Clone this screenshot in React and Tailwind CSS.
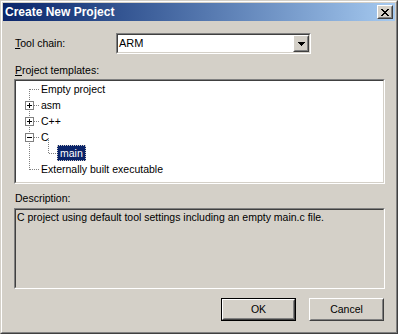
import React from "react";

const font = { fontFamily: '"Liberation Sans", Arial, sans-serif' };

function Sunken({ className = "", inner = "", children }) {
  return (
    <div className={`border border-t-[#808080] border-l-[#808080] border-r-white border-b-white ${className}`}>
      <div className={`h-full border border-t-[#404040] border-l-[#404040] border-r-[#d4d0c8] border-b-[#d4d0c8] ${inner}`}>
        {children}
      </div>
    </div>
  );
}

function Raised({ className = "", inner = "", children }) {
  return (
    <div className={`border border-t-white border-l-white border-r-[#404040] border-b-[#404040] ${className}`}>
      <div className={`h-full border border-t-[#d4d0c8] border-l-[#d4d0c8] border-r-[#808080] border-b-[#808080] ${inner}`}>
        {children}
      </div>
    </div>
  );
}

function Tree() {
  const rows = [
    { label: "Empty project", x: 25 },
    { label: "asm", x: 25 },
    { label: "C++", x: 25 },
    { label: "C", x: 25 },
    { label: "main", x: 41, selected: true },
    { label: "Externally built executable", x: 25 },
  ];
  const dot = "#808080";
  const boxes = [1, 2, 3];
  return (
    <div className="relative h-full bg-white">
      <svg className="absolute left-0 top-0" width="367" height="101" shapeRendering="crispEdges">
        <line x1="13.5" y1="8" x2="13.5" y2="89" stroke={dot} strokeDasharray="1 1" />
        {[0, 1, 2, 3, 5].map((i) => (
          <line key={i} x1="14" y1={i * 16 + 8.5} x2="23" y2={i * 16 + 8.5} stroke={dot} strokeDasharray="1 1" />
        ))}
        <line x1="32.5" y1="57" x2="32.5" y2="72" stroke={dot} strokeDasharray="1 1" />
        <line x1="33" y1="72.5" x2="41" y2="72.5" stroke={dot} strokeDasharray="1 1" />
        {boxes.map((i) => {
          const cy = i * 16 + 8;
          return (
            <g key={i}>
              <rect x="9.5" y={cy - 4 + 0.5} width="8" height="8" fill="white" stroke="#808080" />
              <line x1="11" y1={cy + 0.5} x2="16" y2={cy + 0.5} stroke="black" />
              {i !== 3 && <line x1="13.5" y1={cy - 2} x2="13.5" y2={cy + 3} stroke="black" />}
            </g>
          );
        })}
      </svg>
      <div className="flex flex-col">
        {rows.map((r, i) => (
          <div key={i} className="h-[16px] flex items-center" style={{ paddingLeft: r.x }}>
            {r.selected ? (
              <span className="h-[16px] flex items-center px-[3px] bg-[#0a246a] text-white outline outline-1 outline-dotted outline-offset-[-1px] outline-[#d4d0c8]">
                {r.label}
              </span>
            ) : (
              <span>{r.label}</span>
            )}
          </div>
        ))}
      </div>
    </div>
  );
}

export default function App() {
  return (
    <div className="w-[398px] h-[334px] text-[10.5px] leading-[13px] text-black select-none" style={font}>
      <div className="w-full h-full border border-t-[#d4d0c8] border-l-[#d4d0c8] border-r-[#404040] border-b-[#404040]">
        <div className="w-full h-full border border-t-white border-l-white border-r-[#808080] border-b-[#808080] bg-[#d4d0c8] p-[1px] flex flex-col">
          <div className="h-[18px] flex items-center justify-between bg-gradient-to-r from-[#0a246a] to-[#a6caf0] pl-[2px] pr-[2px]">
            <span className="text-white font-bold text-[12px]">Create New Project</span>
            <Raised className="w-[16px] h-[14px] bg-[#d4d0c8]" inner="flex items-center justify-center">
              <svg width="8" height="7" viewBox="0 0 8 7" shapeRendering="crispEdges">
                <path d="M0 0h2v1h-2zM6 0h2v1h-2zM1 1h2v1h-2zM5 1h2v1h-2zM2 2h4v1h-4zM3 3h2v1h-2zM2 4h4v1h-4zM1 5h2v1h-2zM5 5h2v1h-2zM0 6h2v1h-2zM6 6h2v1h-2z" fill="black" />
              </svg>
            </Raised>
          </div>
          <div className="flex flex-col pl-[11px] pr-[10px]">
            <div className="mt-[12px] h-[21px] flex items-center">
              <span className="w-[102px] pl-[1px]"><u>T</u>ool chain:</span>
              <Sunken className="w-[195px] h-[21px] bg-white" inner="flex items-center justify-between pl-[1px]">
                <span className="text-[11px]">ARM</span>
                <Raised className="w-[16px] h-[17px] bg-[#d4d0c8]" inner="flex items-center justify-center">
                  <svg width="7" height="4" viewBox="0 0 7 4" shapeRendering="crispEdges">
                    <path d="M0 0h7v1h-7zM1 1h5v1h-5zM2 2h3v1h-3zM3 3h1v1h-1z" fill="black" />
                  </svg>
                </Raised>
              </Sunken>
            </div>
            <div className="mt-[10px] pl-[1px]"><u>P</u>roject templates:</div>
            <Sunken className="mt-[2px] h-[105px]">
              <Tree />
            </Sunken>
            <div className="mt-[8px] pl-[1px]">Description:</div>
            <Sunken className="mt-[3px] h-[81px]" inner="bg-[#d4d0c8] pl-[1px] pt-[1px]">
              C project using default tool settings including an empty main.c file.
            </Sunken>
            <div className="mt-[9px] flex justify-end gap-[13px] pr-[1px]">
              <div className="w-[75px] h-[23px] border border-black">
                <div className="h-full border border-t-white border-l-white border-r-[#404040] border-b-[#404040]">
                  <div className="h-full border border-t-[#d4d0c8] border-l-[#d4d0c8] border-r-[#808080] border-b-[#808080] flex items-center justify-center">
                    OK
                  </div>
                </div>
              </div>
              <Raised className="w-[75px] h-[23px]" inner="flex items-center justify-center">
                Cancel
              </Raised>
            </div>
          </div>
        </div>
      </div>
    </div>
  );
}
